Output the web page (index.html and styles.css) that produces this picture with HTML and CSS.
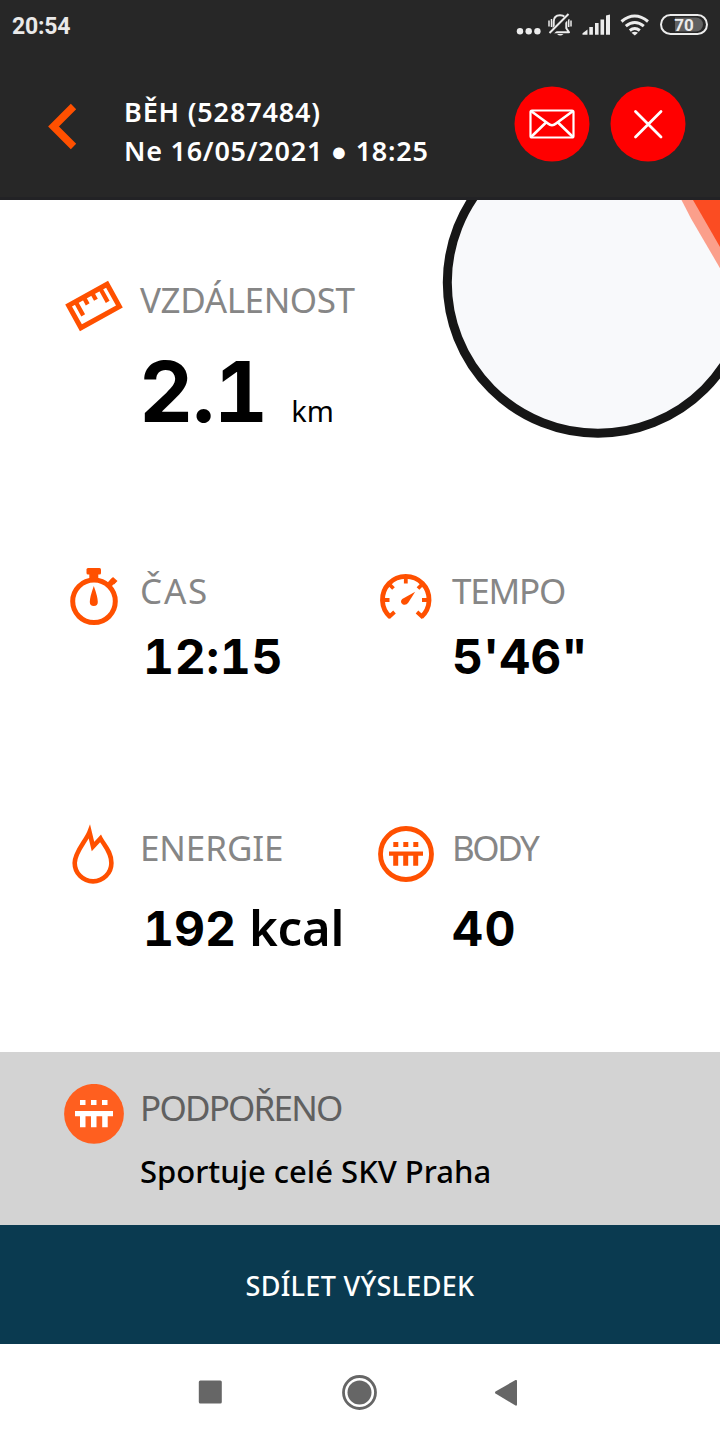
FILE: index.html
```html
<!DOCTYPE html>
<html lang="cs">
<head>
<meta charset="utf-8">
<title>BĚH</title>
<link rel="stylesheet" href="styles.css">
</head>
<body>
<header class="top">
  <div class="status">
    <span class="clock">20:54</span>
    <svg class="status-icons" viewBox="510 5 205 40" fill="#ececec">
      <circle cx="520" cy="31.3" r="3.2"/><circle cx="528.7" cy="31.3" r="3.2"/><circle cx="537.4" cy="31.3" r="3.2"/>
      <g fill="none" stroke="#ececec" stroke-width="2"><path d="M552 32.3h17l-2.700-4v-6.500q0-6.500-6.300-6.500t-6.300 6.500v6.500z" stroke-linejoin="round"/><path d="M549 20.500v6M571 20.500v6M551.500 19v8M568.700 19v8" stroke-width="1.500"/><path d="M569 15.500L550.500 33.500" stroke="#272727" stroke-width="5"/><path d="M568.500 14L549.500 33"/></g>
      <path d="M557 34h6.500q-3.200 3-6.500 0z"/>
      <path d="M582.500 34.700v-1.500l5-3.700v5.200zM589.300 27h3.600v7.700h-3.600zM595 23h3.600v11.700H595zM600.500 19.500h3.600v15.200h-3.600zM606 15.500l4-1v20.200h-4z"/>
      <g fill="none" stroke="#ececec" stroke-width="3"><path d="M621.500 21.500q13.200-11 26.500 0M625.800 26.200q9-7.500 18 0M629.800 30.500q5-4 10 0"/></g><path d="M631.500 32.800q3.300-2 6.500 0l-3.200 2.800z"/>
      <rect x="661" y="15" width="46" height="19" rx="9.500" fill="none" stroke="#ececec" stroke-width="2"/>
      <path d="M675 17.500h21a7 7 0 0 1 0 14h-21z" fill="#606060"/>
      <text x="684" y="31" class="battery-level">70</text>
    </svg>
  </div>
  <div class="bar">
    <svg class="back" viewBox="46 102 32 50"><path d="M73.500 106.500L53.500 126.500L73.500 146.500" fill="none" stroke="#ff5000" stroke-width="7.600"/></svg>
    <div class="title"><div class="line-id">BĚH (5287484)</div><div class="line-date">Ne 16/05/2021 ● 18:25</div></div>
    <div class="actions">
      <svg class="round" viewBox="514 86 76 76"><circle cx="552" cy="124" r="37.500" fill="#f00"/><g fill="none" stroke="#fff" stroke-width="2.200"><rect x="530.500" y="110.500" width="43" height="27" rx="1.500"/><path d="M531 111L548 123.500Q552 127 556 123.500L573 111M531 137L545.500 123M573 137L558.500 123" stroke-width="2.600"/></g></svg>
      <svg class="round" viewBox="610 86 76 76"><circle cx="648" cy="124" r="37.500" fill="#f00"/><path d="M635.500 111.500L661 137M661 111.500L635.500 137" stroke="#fff" stroke-width="2.800" stroke-linecap="round"/></svg>
    </div>
  </div>
</header>

<main class="metrics">
  <svg class="dial" viewBox="440 200 280 240"><circle cx="598" cy="282.500" r="150.700" fill="#f8f9fb" stroke="#161616" stroke-width="9"/><path d="M681.500 200h39v69L691 218.500z" fill="#fb9f8b"/><path d="M693 200h27v47z" fill="#fb4c22"/></svg>
  <section class="metric distance">
    <svg class="icon" viewBox="62 276 64 64"><g transform="translate(94 306) rotate(-29)" fill="none" stroke="#ff5000"><rect x="-22" y="-12.700" width="44" height="25.400" stroke-width="5"/><path d="M-14-12v15M-4.700-12v7.500M4.700-12v7.500M14-12v15" stroke-width="4.300"/></g></svg>
    <div><h2 class="label l-distance">VZDÁLENOST</h2><p class="value big"><span class="number">2.1</span><span class="unit">km</span></p></div>
  </section>
  <section class="metric">
    <svg class="icon" viewBox="62 567 64 64"><g fill="none" stroke="#ff5000"><circle cx="94" cy="601.300" r="21.300" stroke-width="5"/><path d="M93.800 573v7" stroke-width="9"/><path d="M109 585l5-5" stroke-width="5.500"/></g><rect x="86.500" y="568" width="14.500" height="6.500" rx="1.500" fill="#ff5000"/><path d="M93.800 586q4 11 4 16a4 4 0 0 1-8 0q0-5 4-16zM113 577l4.500 4-3.500 3.500-4.500-4z" fill="#ff5000"/></svg>
    <div><h2 class="label l-time">ČAS</h2><p class="value v-time">12:15</p></div>
  </section>
  <section class="metric">
    <svg class="icon" viewBox="374 567 64 64"><g fill="none" stroke="#ff5000"><path d="M390.200 617A23.300 23.300 0 1 1 421.300 617" stroke-width="4.800"/><path d="M383 600h6.500M405.800 577v6.500M422 600h6M389 584l4.500 4.500M422.500 584l-4.500 4.500M388.500 617.500l6-5.500M423 617.500l-6-5.500" stroke-width="3.800"/></g><path d="M415.200 591.700l-7 11q-2 3-5.300 1.700-3.500-2.200-.7-5.500z" fill="#ff5000"/></svg>
    <div><h2 class="label l-pace">TEMPO</h2><p class="value v-pace">5'46"</p></div>
  </section>
  <section class="metric">
    <svg class="icon" viewBox="62 824 64 64"><path d="M89.500 832C86 841 74.700 852 74.700 863a18.300 18.300 0 0 0 36.700 0C111.500 852 104 845 100.500 838.500L93 846.500z" fill="none" stroke="#ff5000" stroke-width="4.600" stroke-miterlimit="8"/></svg>
    <div><h2 class="label l-energy">ENERGIE</h2><p class="value low v-energy">192 <span class="kcal">kcal</span></p></div>
  </section>
  <section class="metric">
    <svg class="icon" viewBox="374 824 64 64"><circle cx="406" cy="854" r="25.500" fill="none" stroke="#ff5000" stroke-width="4.800"/><path d="M393.300 842h5v5h-5zM403.300 842h5v5h-5zM413.300 842h5v5h-5zM389 851.500h34v4.300h-4.800v10h-5v-10h-5v10h-5v-10h-5v10h-5v-10H389z" fill="#ff5000"/></svg>
    <div><h2 class="label l-points">BODY</h2><p class="value low v-points">40</p></div>
  </section>
</main>

<section class="metric supported">
  <svg class="icon" viewBox="62 1084 64 64"><circle cx="94" cy="1113.800" r="29.900" fill="#ff5f1f"/><path d="M80 1100h5.500v5H80zM91 1100h5.500v5H91zM102 1100h5.500v5H102zM75 1111h38v5.200h-5.300v11h-5.500v-11H96.500v11H91v-11h-5.500v11H80v-11h-5z" fill="#fff"/></svg>
  <div><h2 class="label l-supported">PODPOŘENO</h2><p class="sponsor">Sportuje celé SKV Praha</p></div>
</section>

<button class="share"><span>SDÍLET VÝSLEDEK</span></button>

<nav class="nav">
  <svg viewBox="190 1372 40 40"><rect x="198.800" y="1380.500" width="23" height="23" rx="1.500"/></svg>
  <svg viewBox="340 1372 40 40"><circle cx="359.500" cy="1392.500" r="16" fill="none" stroke="#666" stroke-width="2.800"/><circle cx="359.500" cy="1392.500" r="12"/></svg>
  <svg viewBox="490 1372 40 40"><path d="M495.500 1391.500L515.500 1380q1.500-.500 1.500 1v23.500q0 1.500-1.500 1l-20-12q-1-1 0-2z"/></svg>
</nav>
</body>
</html>
```

FILE: styles.css
```css
* { box-sizing: border-box; }
body { margin: 0; width: 720px; height: 1440px; overflow: hidden; background: #fff; color: #000; font-family: "Noto Sans", sans-serif; }
h2, p { margin: 0; font-weight: 400; white-space: nowrap; }
svg { display: block; flex: none; }

.top { height: 200px; background: #272727; color: #fff; border-bottom: 3px solid #222225; }
.status { display: flex; justify-content: space-between; padding: 5px 5px 0 12px; height: 50px; }
.clock { font: 700 23px/44px Roboto, sans-serif; color: #e9e9e9; letter-spacing: -0.2px; }
.status-icons { width: 205px; height: 40px; }
.battery-level { font: 700 17px Roboto, sans-serif; text-anchor: middle; }
.bar { display: flex; padding: 36px 34px 0 46px; }
.back { width: 32px; height: 50px; margin-top: 16px; }
.title { margin: 6px 0 0 46px; flex: 1; font-weight: 600; font-size: 27px; line-height: 39px; white-space: nowrap; }
.line-id { letter-spacing: 0.85px; }
.line-date { letter-spacing: 0.75px; }
.actions { display: flex; gap: 20px; }
.round { width: 76px; height: 76px; }

.metrics { position: relative; height: 852px; padding: 76px 34px 0 62px; display: grid; grid-template-columns: 312px 312px; grid-template-rows: 291px 257px auto; }
.dial { position: absolute; top: 0; right: 0; width: 280px; height: 240px; }
.metric { display: flex; gap: 14px; }
.distance { grid-column: 1 / 3; position: relative; }
.icon { width: 64px; height: 64px; }
.label { margin-top: 4px; font-size: 35px; line-height: 40px; color: #868686; }
.value { margin-top: 16px; font-family: Inter, "Noto Sans", sans-serif; font-size: 48px; line-height: 60px; font-weight: 700; font-variant-numeric: tabular-nums; }
.low { margin-top: 31px; }
.big { margin-top: 32px; font-size: 84px; line-height: 80px; }
.number { letter-spacing: -1px; margin-left: -1px; }
.unit { margin-left: 24px; font-family: "Noto Sans", sans-serif; font-size: 29px; font-weight: 400; }
.kcal { font-family: "Noto Sans", sans-serif; font-size: 49px; font-weight: 600; letter-spacing: -0.2px; }
.l-distance { letter-spacing: -0.4px; }
.l-time { letter-spacing: 1.800px; }
.l-pace { letter-spacing: -1.200px; }
.l-energy { letter-spacing: -0.100px; }
.l-points { letter-spacing: -2.400px; }
.v-time { padding-left: 3px; letter-spacing: 0.6px; }
.v-energy { margin-top: 29px; padding-left: 3px; }
.v-points { letter-spacing: 1.5px; }

.supported { height: 173px; padding: 32px 62px 0; background: #d3d3d3; }
.l-supported { color: #606060; letter-spacing: -1.800px; }
.sponsor { margin-top: 23px; font-size: 31px; line-height: 40px; font-weight: 500; }
.share { display: block; width: 720px; height: 119px; padding: 2px 0 0; border: 0; background: #0a3a50; color: #fff; font: 500 27px/40px "Noto Sans", sans-serif; letter-spacing: 0.300px; }
.nav { height: 96px; padding: 28px 190px 0; display: flex; justify-content: space-between; background: #fff; fill: #666; }
.nav svg { width: 40px; height: 40px; }
```
